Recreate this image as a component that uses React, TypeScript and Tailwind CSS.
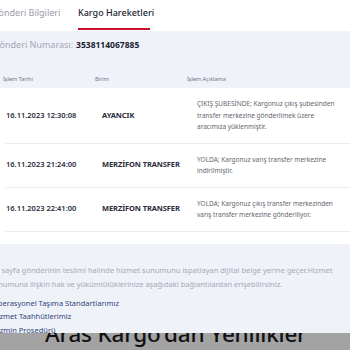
const rows = [
  {
    date: "16.11.2023 12:30:08",
    unit: "AYANCIK",
    desc: "ÇIKIŞ ŞUBESİNDE; Kargonuz çıkış şubesinden transfer merkezine gönderilmek üzere aracımıza yüklenmiştir.",
  },
  {
    date: "16.11.2023 21:24:00",
    unit: "MERZİFON TRANSFER",
    desc: "YOLDA; Kargonuz varış transfer merkezine indirilmiştir.",
  },
  {
    date: "16.11.2023 22:41:00",
    unit: "MERZİFON TRANSFER",
    desc: "YOLDA; Kargonuz çıkış transfer merkezinden varış transfer merkezine gönderiliyor.",
  },
]

const links = ["Operasyonel Taşıma Standartlarımız", "Hizmet Taahhütlerimiz", "Tazmin Prosedürü"]

export default function App() {
  return (
    <div className="w-[350px] h-[350px] overflow-hidden bg-white font-['Noto_Sans',sans-serif]">
      {/* Tabs */}
      <div className="flex h-[31px] items-end bg-white">
        <div className="ml-[-8px] w-[86px] pb-[12px] text-[9px] text-[#9a9aa6]">Gönderi Bilgileri</div>
        <div className="flex flex-col">
          <div className="pb-[9px] text-[9px] font-medium text-[#1c1f33]">Kargo Hareketleri</div>
          <div className="mb-[1px] h-[2px] w-[72px] bg-[#c8102e]" />
        </div>
      </div>

      {/* Shipment number + table header */}
      <div className="bg-[#eff2f9] h-[57px] pt-[7px]">
        <div className="ml-[-7px] flex items-baseline gap-[3px]">
          <span className="text-[9px] text-[#a4a6b4]">Gönderi Numarası:</span>
          <span className="text-[8.5px] font-bold text-[#1c1f33]">3538114067885</span>
        </div>
        <div className="mt-[23px] grid grid-cols-[92px_92px_1fr] pl-[3px] text-[5.5px] text-[#707384]">
          <span>İşlem Tarihi</span>
          <span>Birim</span>
          <span>İşlem Açıklama</span>
        </div>
      </div>

      {/* Rows */}
      <div className="bg-white pb-[12px]">
        {rows.map((r) => (
          <div
            key={r.date}
            className="ml-[5px] grid grid-cols-[97px_95px_1fr] items-center border-b border-[#ececf0] py-[10px]"
          >
            <span className="pl-[1px] text-[7.5px] font-semibold text-[#2a2c3a]">{r.date}</span>
            <span className="text-[7.5px] font-bold tracking-[-0.1px] text-[#2a2c3a]">{r.unit}</span>
            <span className="pr-[10px] text-[6.5px] leading-[11.5px] text-[#66666f]">{r.desc}</span>
          </div>
        ))}
      </div>

      {/* Info */}
      <div className="bg-[#eff2f9] h-[89px] pt-[19px]">
        <p className="ml-[-10px] w-[365px] text-[7.5px] leading-[14px] text-[#a7a9b7]">
          Bu sayfa gönderinin teslimi halinde hizmet sunumunu ispatlayan dijital belge yerine geçer.Hizmet sunumuna ilişkin hak ve yükümlülüklerinize aşağıdaki bağlantılardan erişebilirsiniz.
        </p>
        <div className="ml-[-8px] mt-[6px] flex flex-col">
          {links.map((l) => (
            <a key={l} className="text-[7.5px] leading-[13.5px] text-[#34457a]">
              {l}
            </a>
          ))}
        </div>
      </div>

      {/* Dimmed banner */}
      <div className="h-[18px] overflow-hidden bg-[#a3a3a3]">
        <div className="mt-[-14px] ml-[45px] whitespace-nowrap text-[22.5px] font-medium leading-[30px] tracking-[-0.2px] text-[#111111]">
          Aras Kargo'dan Yenilikler
        </div>
      </div>
    </div>
  )
}
